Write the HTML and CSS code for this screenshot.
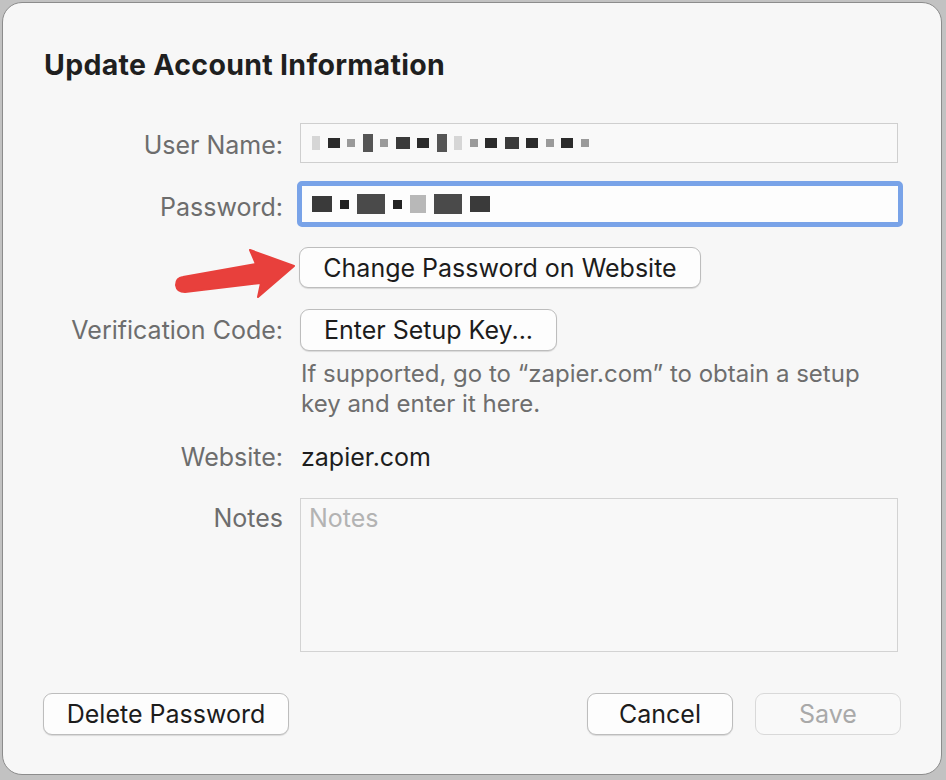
FILE: index.html
```html
<!DOCTYPE html>
<html lang="en">
<head>
<meta charset="utf-8">
<title>Update Account Information</title>
<link rel="stylesheet" href="styles.css">
</head>
<body>
<div class="dialog">
  <h1 class="title">Update Account Information</h1>
  <div class="form">
    <div class="row r1">
      <div class="label">User Name:</div>
      <div class="field">
        <span class="blur b4"></span><span class="blur b1"></span><span class="blur b2"></span><span class="blur b3"></span><span class="blur b2"></span><span class="blur b5"></span><span class="blur b1"></span><span class="blur b3"></span><span class="blur b4"></span><span class="blur b2"></span><span class="blur b1"></span><span class="blur b5"></span><span class="blur b1"></span><span class="blur b2"></span><span class="blur b1"></span><span class="blur b2"></span>
      </div>
    </div>
    <div class="row r2">
      <div class="label">Password:</div>
      <div class="field focused">
        <span class="blur p1"></span><span class="blur p2"></span><span class="blur p3"></span><span class="blur p2"></span><span class="blur p4"></span><span class="blur p3"></span><span class="blur p1"></span>
      </div>
    </div>
    <div class="row r3">
      <div class="label"></div>
      <div class="ctrl"><button class="btn change">Change Password on Website</button></div>
    </div>
    <div class="row r4">
      <div class="label">Verification Code:</div>
      <div class="ctrl"><button class="btn setup">Enter Setup Key...</button></div>
    </div>
    <div class="row help">
      <div class="label"></div>
      <div class="helptext">If supported, go to “zapier.com” to obtain a setup<br>key and enter it here.</div>
    </div>
    <div class="row website">
      <div class="label">Website:</div>
      <div class="value">zapier.com</div>
    </div>
    <div class="row notes">
      <div class="label top">Notes</div>
      <div class="textarea"><span class="placeholder">Notes</span></div>
    </div>
  </div>
  <div class="footer">
    <button class="btn delete">Delete Password</button>
    <div class="right">
      <button class="btn cancel">Cancel</button>
      <button class="btn save" disabled>Save</button>
    </div>
  </div>
  <svg class="arrow" width="130" height="70" viewBox="170 240 130 70">
    <path d="M183 277 L256 264 L250 250 L294 266 L258 297 L261 283 L185 292 Q177 292 176 285 Q176 278 183 277 Z" fill="#e8403c" stroke="#e8403c" stroke-width="2" stroke-linejoin="round"/>
  </svg>
</div>
</body>
</html>
```

FILE: styles.css
```css
* { box-sizing: border-box; }
html, body { margin: 0; padding: 0; }
body {
  width: 946px;
  height: 780px;
  background: #c2c2c2;
  font-family: Inter, "Noto Sans", "Liberation Sans", sans-serif;
  overflow: hidden;
}
.dialog {
  position: relative;
  margin: 2px 4px 0 2px;
  width: 940px;
  height: 773px;
  background: #f7f7f7;
  border: 1px solid #8c8c8c;
  border-radius: 20px;
  padding: 45px 40px 0 40px;
}
.title {
  margin: 0;
  font-size: 28.5px;
  line-height: 34px;
  font-weight: 700;
  color: #1f1f1f;
  letter-spacing: 0.3px;
  padding-left: 1px;
}
.form {
  margin-top: 41px;
}
.row {
  display: grid;
  grid-template-columns: 240px 598px;
  column-gap: 17px;
  align-items: center;
}
.label {
  text-align: right;
  font-size: 25px;
  color: #6d6d6d;
  white-space: nowrap;
}
.r1 .label { padding-top: 4px; }
.r2 .label { padding-top: 5px; }
.label.top { align-self: start; padding-top: 5px; }
.r1 { height: 40px; }
.r2 { height: 46px; margin-top: 18px; }
.r3 { height: 41px; margin-top: 20px; }
.r4 { height: 42px; margin-top: 21px; }
.help { margin-top: 8px; }
.website { margin-top: 23px; height: 30px; }
.notes { margin-top: 26px; align-items: start; }
.field {
  height: 40px;
  border: 1px solid #cfcfcf;
  background: #f9f9f9;
  display: flex;
  align-items: center;
  padding-left: 11px;
  gap: 7.5px;
}
.field.focused {
  height: 46px;
  margin-left: -3px;
  width: 606px;
  border: 5px solid #79a3e8;
  border-radius: 5px;
  background: #fdfdfd;
  padding-left: 10px;
  gap: 8px;
}
.blur { display: inline-block; }
.b1 { width: 12px; height: 10px; background: #2b2b2b; }
.b2 { width: 8px; height: 8px; background: #9a9a9a; }
.b3 { width: 10px; height: 18px; background: #555; }
.b4 { width: 8px; height: 14px; background: #d6d6d6; }
.b5 { width: 14px; height: 12px; background: #3a3a3a; }
.p1 { width: 20px; height: 16px; background: #3a3a3a; }
.p2 { width: 9px; height: 9px; background: #222; }
.p3 { width: 28px; height: 20px; background: #4a4a4a; }
.p4 { width: 16px; height: 18px; background: #b8b8b8; }
.ctrl { display: flex; }
.btn {
  font-family: Inter, "Noto Sans", "Liberation Sans", sans-serif;
  font-size: 25px;
  color: #1c1c1c;
  background: #fdfdfd;
  border: 1px solid #bdbdbd;
  border-radius: 9px;
  box-shadow: 0 1px 1px rgba(0,0,0,0.12);
  padding: 0;
  height: 42px;
  white-space: nowrap;
}
.change { width: 402px; height: 41px; margin-left: -1px; }
.setup { width: 257px; }
.helptext {
  font-size: 24px;
  line-height: 30px;
  color: #6e6e6e;
  padding-left: 1px;
}
.value {
  font-size: 25px;
  color: #1d1d1d;
  padding-left: 1px;
}
.textarea {
  height: 154px;
  border: 1px solid #d3d3d3;
  background: #f8f8f8;
  padding: 4px 8px;
}
.placeholder {
  font-size: 25px;
  color: #b3b3b3;
}
.footer {
  margin-top: 41px;
  display: flex;
  justify-content: space-between;
}
.right { display: flex; gap: 22px; }
.delete { width: 246px; }
.cancel { width: 146px; }
.save {
  width: 146px;
  color: #a9a9a9;
  border-color: #d9d9d9;
  box-shadow: none;
  background: #f9f9f9;
}
.arrow {
  position: absolute;
  left: 167px;
  top: 237px;
}
```
